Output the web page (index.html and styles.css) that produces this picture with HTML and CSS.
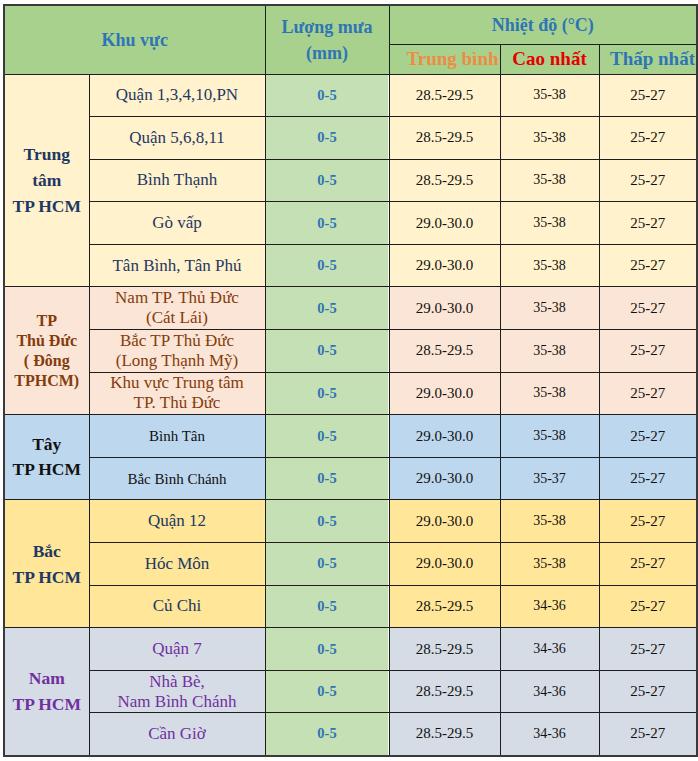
FILE: index.html
```html
<!DOCTYPE html>
<html lang="vi">
<head>
<meta charset="utf-8">
<title>Dự báo thời tiết TP HCM</title>
<link rel="stylesheet" href="styles.css">
</head>
<body>
<table class="wx">
  <colgroup>
    <col class="c-grp"><col class="c-area"><col class="c-rain"><col class="c-avg"><col class="c-max"><col class="c-min">
  </colgroup>
  <thead>
    <tr class="h1">
      <th colspan="2" rowspan="2" class="hd">Khu vực</th>
      <th rowspan="2" class="hd">Lượng mưa<br>(mm)</th>
      <th colspan="3" class="hd">Nhiệt độ (°C)</th>
    </tr>
    <tr class="h2">
      <th class="sub avg">Trung bình</th>
      <th class="sub max">Cao nhất</th>
      <th class="sub min">Thấp nhất</th>
    </tr>
  </thead>
  <tbody class="g-center">
    <tr><th rowspan="5" class="grp">Trung<br>tâm<br>TP HCM</th><td class="area">Quận 1,3,4,10,PN</td><td class="rain">0-5</td><td class="num">28.5-29.5</td><td class="num n2">35-38</td><td class="num">25-27</td></tr>
    <tr><td class="area">Quận 5,6,8,11</td><td class="rain">0-5</td><td class="num">28.5-29.5</td><td class="num n2">35-38</td><td class="num">25-27</td></tr>
    <tr><td class="area">Bình Thạnh</td><td class="rain">0-5</td><td class="num">28.5-29.5</td><td class="num n2">35-38</td><td class="num">25-27</td></tr>
    <tr><td class="area">Gò vấp</td><td class="rain">0-5</td><td class="num">29.0-30.0</td><td class="num n2">35-38</td><td class="num">25-27</td></tr>
    <tr><td class="area">Tân Bình, Tân Phú</td><td class="rain">0-5</td><td class="num">29.0-30.0</td><td class="num n2">35-38</td><td class="num">25-27</td></tr>
  </tbody>
  <tbody class="g-east">
    <tr><th rowspan="3" class="grp">TP<br>Thủ Đức<br>( Đông<br>TPHCM)</th><td class="area two">Nam TP. Thủ Đức<br>(Cát Lái)</td><td class="rain">0-5</td><td class="num">29.0-30.0</td><td class="num n2">35-38</td><td class="num">25-27</td></tr>
    <tr><td class="area two">Bắc TP Thủ Đức<br>(Long Thạnh Mỹ)</td><td class="rain">0-5</td><td class="num">28.5-29.5</td><td class="num n2">35-38</td><td class="num">25-27</td></tr>
    <tr><td class="area two">Khu vực Trung tâm<br>TP. Thủ Đức</td><td class="rain">0-5</td><td class="num">29.0-30.0</td><td class="num n2">35-38</td><td class="num">25-27</td></tr>
  </tbody>
  <tbody class="g-west">
    <tr><th rowspan="2" class="grp">Tây<br>TP HCM</th><td class="area">Bình Tân</td><td class="rain">0-5</td><td class="num">29.0-30.0</td><td class="num n2">35-38</td><td class="num">25-27</td></tr>
    <tr><td class="area">Bắc Bình Chánh</td><td class="rain">0-5</td><td class="num">29.0-30.0</td><td class="num n2">35-37</td><td class="num">25-27</td></tr>
  </tbody>
  <tbody class="g-north">
    <tr><th rowspan="3" class="grp">Bắc<br>TP HCM</th><td class="area">Quận 12</td><td class="rain">0-5</td><td class="num">29.0-30.0</td><td class="num n2">35-38</td><td class="num">25-27</td></tr>
    <tr><td class="area">Hóc Môn</td><td class="rain">0-5</td><td class="num">29.0-30.0</td><td class="num n2">35-38</td><td class="num">25-27</td></tr>
    <tr><td class="area">Củ Chi</td><td class="rain">0-5</td><td class="num">28.5-29.5</td><td class="num n2">34-36</td><td class="num">25-27</td></tr>
  </tbody>
  <tbody class="g-south">
    <tr><th rowspan="3" class="grp">Nam<br>TP HCM</th><td class="area">Quận 7</td><td class="rain">0-5</td><td class="num">28.5-29.5</td><td class="num n2">34-36</td><td class="num">25-27</td></tr>
    <tr><td class="area two">Nhà Bè,<br>Nam Bình Chánh</td><td class="rain">0-5</td><td class="num">28.5-29.5</td><td class="num n2">34-36</td><td class="num">25-27</td></tr>
    <tr><td class="area">Cần Giờ</td><td class="rain">0-5</td><td class="num">28.5-29.5</td><td class="num n2">34-36</td><td class="num">25-27</td></tr>
  </tbody>
</table>
</body>
</html>
```
FILE: styles.css
```css
html, body {
  margin: 0;
  padding: 0;
  background: #ffffff;
}
body {
  padding: 4px 0 0 3px;
  font-family: "Liberation Serif", "Times New Roman", serif;
}
.wx {
  border-collapse: collapse;
  table-layout: fixed;
  width: 693px;
  border: 2px solid #3a3a3a;
}
.c-grp { width: 85px; }
.c-area { width: 176px; }
.c-rain { width: 124px; }
.c-avg { width: 111px; }
.c-max { width: 99px; }
.c-min { width: 98px; }

.wx th, .wx td {
  border: 1px solid #1e1e1e;
  padding: 0;
  text-align: center;
  vertical-align: middle;
}
.h1 { height: 39px; }
.h2 { height: 30px; }
.hd {
  background: #a9d18e;
  color: #2e75b6;
  font-weight: bold;
  font-size: 18px;
  line-height: 26px;
}
.sub {
  background: #a9d18e;
  font-weight: bold;
  font-size: 19px;
  line-height: 24px;
  white-space: nowrap;
}
.sub.avg { color: #ee8b45; text-align: right; padding-right: 1px; }
.sub.max { color: #e60000; }
.sub.min { color: #2e75b6; text-align: right; padding-right: 1px; }

.wx tbody tr { height: 42.6px; }
.grp {
  font-weight: bold;
  font-size: 17.5px;
  line-height: 26px;
}
.area {
  font-size: 17px;
  line-height: 22px;
}
.area.two { line-height: 20px; }
.rain {
  background: #c5e0b4;
  color: #2e75b6;
  font-weight: bold;
  font-size: 14.5px;
  box-shadow: inset -1px 0 0 #f4f8f0;
}
.num {
  color: #111111;
  font-size: 15px;
}
.num.n2 { font-size: 14px; }

.g-center th, .g-center td:not(.rain) { background: #fff2cc; }
.g-center .grp, .g-center .area { color: #1f3864; }

.g-east th, .g-east td:not(.rain) { background: #fbe5d6; }
.g-east .grp { color: #843c0c; font-size: 16px; line-height: 20px; }
.g-east .area { color: #843c0c; }

.g-west th, .g-west td:not(.rain) { background: #bdd7ee; }
.g-west .grp { color: #111111; line-height: 25px; }
.g-west .area { color: #111111; font-size: 15px; }

.g-north th, .g-north td:not(.rain) { background: #ffe699; }
.g-north .grp, .g-north .area { color: #203864; }

.g-south th, .g-south td:not(.rain) { background: #d6dce5; }
.g-south .grp, .g-south .area { color: #7030a0; }
```
